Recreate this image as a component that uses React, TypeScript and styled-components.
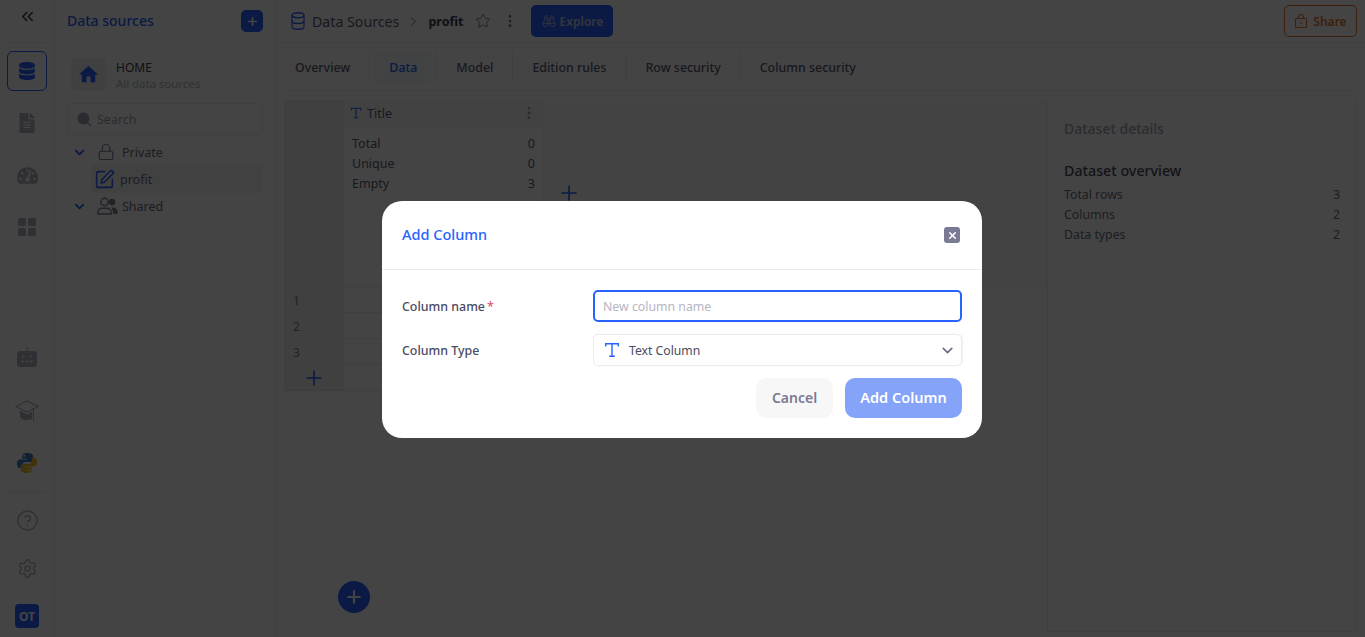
import React from 'react'
import styled, { createGlobalStyle } from 'styled-components'
import {
  Binoculars,
  ChevronDown,
  ChevronRight,
  ChevronsLeft,
  CircleHelp,
  Database,
  EllipsisVertical,
  Lock,
  Plus,
  Settings,
  SquarePen,
  Star,
  X,
} from 'lucide-react'
import { FaDatabase, FaFileAlt, FaTachometerAlt } from 'react-icons/fa'
import { MdHome } from 'react-icons/md'

const GlobalStyle = createGlobalStyle`
  * { box-sizing: border-box; }
  html, body { margin: 0; height: 100%; overflow: hidden; background: #fff; }
  body { font-family: "Noto Sans", "Open Sans", sans-serif; color: #5c5c74; }
`

const TextTypeIcon = ({ size = 14 }: { size?: number }) => (
  <svg width={size} height={size} viewBox="0 0 16 16" fill="none" stroke="currentColor" strokeWidth="1.4">
    <path d="M1.7 4.6V1.7h12.6v2.9M8 1.7v12.6M5.2 14.3h5.6" />
  </svg>
)

const GridIcon = () => (
  <svg width="18" height="18" viewBox="0 0 18 18" fill="currentColor">
    <rect x="0" y="0" width="8" height="8" rx="1.5" />
    <rect x="10" y="0" width="8" height="8" rx="1.5" />
    <rect x="0" y="10" width="8" height="8" rx="1.5" />
    <rect x="10" y="10" width="8" height="8" rx="1.5" />
  </svg>
)

const RobotIcon = () => (
  <svg width="20" height="20" viewBox="0 0 20 20">
    <path fill="currentColor" d="M9.5 0h1v4H17a3 3 0 0 1 3 3v10a3 3 0 0 1-3 3H3a3 3 0 0 1-3-3V7a3 3 0 0 1 3-3h6.500z" />
    <g fill="#eeeef3">
      <circle cx="6.500" cy="9.500" r="1.200" />
      <circle cx="13.500" cy="9.500" r="1.200" />
      <circle cx="5.500" cy="14.500" r="1.200" />
      <circle cx="10" cy="14.500" r="1.200" />
      <circle cx="14.500" cy="14.500" r="1.200" />
    </g>
  </svg>
)

const GraduationIcon = () => (
  <svg width="24" height="22" viewBox="0 0 24 22" fill="none" stroke="currentColor" strokeWidth="1.200">
    <path d="M12 1 23.200 6.500 12 12 .8 6.500z" />
    <path fill="currentColor" stroke="none" d="M5 10.200v6.300c0 1.900 3.300 3.500 7 3.500s5-1 5-1v-7.200l-5 2.700z" />
    <path d="M17 8.500h1.500V21" />
  </svg>
)

const PythonIcon = () => (
  <svg width="22" height="22" viewBox="0 0 24 24">
    <path
      fill="#3f7fc0"
      d="M11.900 1C8.600 1 6.700 2.300 6.700 4.600v2.700h5.400v.9H4.600C2.300 8.200 1 10 1 12.900c0 3 1.300 4.900 3.500 4.900h2V15c0-2.200 1.800-4 4-4h5.200c1.700 0 3-1.400 3-3V4.400C18.700 2.200 16 1 11.900 1zM9 3a1.100 1.100 0 1 1 0 2.200A1.100 1.100 0 0 1 9 3z"
    />
    <path
      fill="#f0c030"
      d="M12.100 23c3.300 0 5.200-1.300 5.200-3.600v-2.700h-5.400v-.9h7.500c2.300 0 3.600-1.800 3.600-4.700 0-3-1.300-4.900-3.500-4.900h-2V9c0 2.200-1.800 4-4 4H8.300c-1.700 0-3 1.400-3 3v3.600C5.300 21.800 8 23 12.100 23zM15 21a1.100 1.100 0 1 1 0-2.200 1.100 1.100 0 0 1 0 2.200z"
    />
  </svg>
)

const SearchBlob = () => (
  <svg width="15" height="15" viewBox="0 0 15 15" fill="currentColor">
    <circle cx="6.500" cy="6.500" r="6" />
    <path d="M10.500 10.500l3.500 3.500" stroke="currentColor" strokeWidth="1.500" />
  </svg>
)

const UsersIcon = () => (
  <svg width="21" height="18" viewBox="0 0 21 18" fill="none" stroke="currentColor" strokeWidth="1.400">
    <circle cx="7.500" cy="5" r="3.700" />
    <path d="M.8 17v-1.500c0-2.600 2-4.300 4.500-4.300h4.400c2.500 0 4.500 1.700 4.500 4.300V17z" />
    <circle cx="15" cy="5" r="3.200" fill="currentColor" stroke="none" />
    <path d="M14 10.500h2.500c2.400 0 4 1.700 4 4.500v2h-4.500c0-2.800-.6-5-2-6.500z" fill="currentColor" stroke="none" />
  </svg>
)

const ShareBagIcon = () => (
  <svg width="14" height="14" viewBox="0 0 14 14" fill="none" stroke="currentColor" strokeWidth="1.100">
    <rect x="1.500" y="4.500" width="11" height="9" rx=".8" />
    <path d="M4.500 4.500V3a2.500 2.500 0 0 1 5 0v1.500M6 9h2" />
  </svg>
)

const railTop = [
  { key: 'file', icon: <FaFileAlt size={20} /> },
  { key: 'gauge', icon: <FaTachometerAlt size={21} /> },
  { key: 'grid', icon: <GridIcon /> },
]
const tabs = ['Overview', 'Data', 'Model', 'Edition rules', 'Row security', 'Column security']
const stats = [
  ['Total', '0'],
  ['Unique', '0'],
  ['Empty', '3'],
]
const overview = [
  ['Total rows', '3'],
  ['Columns', '2'],
  ['Data types', '2'],
]

export default function App() {
  return (
    <>
      <GlobalStyle />
      <Page>
        <Rail>
          <RailCollapse>
            <ChevronsLeft size={19} strokeWidth={2} />
          </RailCollapse>
          <RailActive>
            <FaDatabase size={18} />
          </RailActive>
          <RailGroup>
            {railTop.map((item) => (
              <RailItem key={item.key}>{item.icon}</RailItem>
            ))}
          </RailGroup>
          <RailBottom>
            <RailRobot>
              <RobotIcon />
            </RailRobot>
            <RailItem>
              <GraduationIcon />
            </RailItem>
            <RailItem>
              <PythonIcon />
            </RailItem>
            <RailDivider />
            <RailSmall>
              <CircleHelp size={23} strokeWidth={1.5} />
            </RailSmall>
            <RailSmall>
              <Settings size={21} strokeWidth={1.6} />
            </RailSmall>
            <Avatar>OT</Avatar>
          </RailBottom>
        </Rail>

        <Sidebar>
          <SidebarHead>
            <SidebarTitle>Data sources</SidebarTitle>
            <SquareAdd>
              <Plus size={13} strokeWidth={3} />
            </SquareAdd>
          </SidebarHead>
          <HomeRow>
            <HomeTile>
              <MdHome size={23} />
            </HomeTile>
            <HomeText>
              <HomeName>HOME</HomeName>
              <HomeSub>All data sources</HomeSub>
            </HomeText>
          </HomeRow>
          <SearchBox>
            <SearchBlob />
            <span>Search</span>
          </SearchBox>
          <Tree>
            <TreeRow>
              <TreeChevron>
                <ChevronDown size={15} strokeWidth={3} />
              </TreeChevron>
              <TreeIcon>
                <Lock size={18} strokeWidth={1.5} />
              </TreeIcon>
              <span>Private</span>
            </TreeRow>
            <TreeLeaf>
              <SquarePen size={21} strokeWidth={1.8} />
              <span>profit</span>
            </TreeLeaf>
            <TreeRow>
              <TreeChevron>
                <ChevronDown size={15} strokeWidth={3} />
              </TreeChevron>
              <TreeIcon>
                <UsersIcon />
              </TreeIcon>
              <span>Shared</span>
            </TreeRow>
          </Tree>
        </Sidebar>

        <Main>
          <TopBar>
            <CrumbIcon>
              <Database width={16} height={20} strokeWidth={1.7} preserveAspectRatio="none" />
            </CrumbIcon>
            <CrumbRoot>Data Sources</CrumbRoot>
            <CrumbSep>
              <ChevronRight size={15} strokeWidth={1.4} />
            </CrumbSep>
            <CrumbName>profit</CrumbName>
            <CrumbStar>
              <Star size={16} strokeWidth={1.3} />
            </CrumbStar>
            <CrumbMore>
              <EllipsisVertical size={16} strokeWidth={2} />
            </CrumbMore>
            <ExploreButton>
              <Binoculars size={14} strokeWidth={1.4} />
              Explore
            </ExploreButton>
            <ShareButton>
              <ShareBagIcon />
              Share
            </ShareButton>
          </TopBar>

          <TabsBar>
            {tabs.map((tab) => (
              <Tab key={tab} $active={tab === 'Data'}>
                {tab}
              </Tab>
            ))}
          </TabsBar>

          <Content>
            <GridArea>
              <TopBand>
                <Corner />
                <ColumnCard>
                  <ColumnHead>
                    <ColumnType>
                      <TextTypeIcon size={12} />
                    </ColumnType>
                    <span>Title</span>
                    <ColumnMore>
                      <EllipsisVertical size={16} strokeWidth={2.4} />
                    </ColumnMore>
                  </ColumnHead>
                  <StatList>
                    {stats.map(([label, value]) => (
                      <StatRow key={label}>
                        <span>{label}</span>
                        <span>{value}</span>
                      </StatRow>
                    ))}
                  </StatList>
                </ColumnCard>
                <AddColumnCell>
                  <Plus size={24} strokeWidth={1.6} />
                </AddColumnCell>
              </TopBand>
              {[1, 2, 3].map((n) => (
                <DataRow key={n}>
                  <RowNumber>{n}</RowNumber>
                  <RowCell />
                </DataRow>
              ))}
              <DataRow>
                <RowAdd>
                  <Plus size={24} strokeWidth={1.6} />
                </RowAdd>
                <RowCell />
              </DataRow>
              <Fab>
                <Plus size={20} strokeWidth={2.6} />
              </Fab>
            </GridArea>

            <Details>
              <DetailsTitle>Dataset details</DetailsTitle>
              <OverviewTitle>Dataset overview</OverviewTitle>
              {overview.map(([label, value]) => (
                <OverviewRow key={label}>
                  <span>{label}</span>
                  <span>{value}</span>
                </OverviewRow>
              ))}
            </Details>
          </Content>
        </Main>
      </Page>

      <Overlay>
        <Modal>
          <ModalHead>
            <ModalTitle>Add Column</ModalTitle>
            <CloseButton>
              <X size={11} strokeWidth={3.4} />
            </CloseButton>
          </ModalHead>
          <ModalBody>
            <FormRow>
              <FieldLabel>
                Column name<Required>*</Required>
              </FieldLabel>
              <NameInput placeholder="New column name" readOnly />
            </FormRow>
            <FormRow>
              <FieldLabel>Column Type</FieldLabel>
              <SelectBox>
                <SelectIcon>
                  <TextTypeIcon size={16} />
                </SelectIcon>
                <SelectText>Text Column</SelectText>
                <SelectChevron>
                  <ChevronDown size={17} strokeWidth={2.4} />
                </SelectChevron>
              </SelectBox>
            </FormRow>
            <ModalActions>
              <CancelButton>Cancel</CancelButton>
              <AddButton>Add Column</AddButton>
            </ModalActions>
          </ModalBody>
        </Modal>
      </Overlay>
    </>
  )
}

const Page = styled.div`
  display: flex;
  height: 100vh;
  background: #fff;
`
const Rail = styled.aside`
  width: 55px;
  flex: none;
  display: flex;
  flex-direction: column;
  align-items: center;
  border-right: 1px solid #ebebf0;
  padding-bottom: 9px;
`
const RailCollapse = styled.div`
  width: 40px;
  height: 43px;
  flex: none;
  display: flex;
  justify-content: center;
  padding-top: 7px;
  color: #3c3c50;
  border-bottom: 1px solid #ebebf0;
`
const RailActive = styled.div`
  width: 40px;
  height: 40px;
  flex: none;
  margin-top: 8px;
  display: flex;
  align-items: center;
  justify-content: center;
  border: 1.5px solid #2962ff;
  border-radius: 6px;
  color: #2962ff;
`
const RailGroup = styled.div`
  margin-top: 6px;
  display: flex;
  flex-direction: column;
  align-items: center;
`
const RailItem = styled.div`
  width: 40px;
  height: 52px;
  flex: none;
  display: flex;
  align-items: center;
  justify-content: center;
  color: #b5b5c3;
`
const RailSmall = styled(RailItem)`
  height: 48px;
`
const RailRobot = styled(RailItem)`
  height: 56px;
`
const RailBottom = styled.div`
  margin-top: auto;
  display: flex;
  flex-direction: column;
  align-items: center;
`
const RailDivider = styled.div`
  width: 40px;
  height: 1px;
  margin: 2px 0 4px;
  background: #ebebf0;
`
const Avatar = styled.div`
  width: 24px;
  height: 24px;
  margin-top: 12px;
  display: flex;
  align-items: center;
  justify-content: center;
  border-radius: 4px;
  background: #2962ff;
  color: #fff;
  font-size: 12px;
  font-weight: 700;
`
const Sidebar = styled.aside`
  width: 221px;
  flex: none;
  padding: 10px 12px 0;
  border-right: 1px solid #ebebf0;
`
const SidebarHead = styled.div`
  height: 22px;
  display: flex;
  align-items: center;
  justify-content: space-between;
`
const SidebarTitle = styled.div`
  padding-bottom: 2px;
  color: #2962ff;
  font-size: 14px;
  font-weight: 500;
`
const SquareAdd = styled.div`
  width: 22px;
  height: 22px;
  display: flex;
  align-items: center;
  justify-content: center;
  border-radius: 5px;
  background: #2962ff;
  color: #fff;
`
const HomeRow = styled.div`
  height: 33px;
  margin: 26px 0 0 4px;
  display: flex;
  align-items: center;
  gap: 10px;
`
const HomeTile = styled.div`
  width: 35px;
  height: 33px;
  display: flex;
  align-items: center;
  justify-content: center;
  border-radius: 6px;
  background: #f0f0f4;
  color: #2962ff;
`
const HomeText = styled.div`
  padding-top: 2px;
`
const HomeName = styled.div`
  color: #3c3c50;
  font-size: 12px;
  line-height: 16px;
`
const HomeSub = styled.div`
  color: #b5b5c3;
  font-size: 11.4px;
  line-height: 16px;
`
const SearchBox = styled.div`
  height: 32px;
  margin-top: 12px;
  padding: 0 9px;
  display: flex;
  align-items: center;
  gap: 5px;
  border: 1px solid #ebebf0;
  border-radius: 6px;
  color: #a1a5b7;
  font-size: 12.5px;
`
const Tree = styled.div`
  margin-top: 4px;
`
const TreeRow = styled.div`
  height: 26px;
  display: flex;
  align-items: center;
  font-size: 12.5px;
  color: #6c6c84;
`
const TreeChevron = styled.span`
  width: 30px;
  padding-left: 5px;
  display: flex;
  color: #2962ff;
`
const TreeIcon = styled.span`
  width: 25px;
  display: flex;
  color: #7e8299;
`
const TreeLeaf = styled.div`
  height: 28px;
  margin-left: 24px;
  padding-left: 3px;
  display: flex;
  align-items: center;
  gap: 5px;
  border-radius: 5px;
  background: #f4f4f7;
  font-size: 12.5px;
  color: #6c6c84;
  svg {
    color: #2962ff;
  }
`
const Main = styled.main`
  flex: 1;
  min-width: 0;
  display: flex;
  flex-direction: column;
`
const TopBar = styled.header`
  height: 43px;
  flex: none;
  padding: 0 8px 0 14px;
  display: flex;
  align-items: center;
  border-bottom: 1px solid #ebebf0;
`
const CrumbIcon = styled.span`
  display: flex;
  color: #2962ff;
`
const CrumbRoot = styled.span`
  margin-left: 6px;
  font-size: 14.2px;
  color: #5c5c74;
`
const CrumbSep = styled.span`
  margin-left: 7px;
  display: flex;
  color: #5c5c74;
`
const CrumbName = styled.span`
  margin-left: 7px;
  font-size: 12.5px;
  font-weight: 700;
  color: #3c3c50;
`
const CrumbStar = styled.span`
  margin-left: 12px;
  display: flex;
  color: #6c6c84;
`
const CrumbMore = styled.span`
  margin-left: 11px;
  display: flex;
  color: #6c6c84;
`
const ExploreButton = styled.button`
  width: 82px;
  height: 32px;
  margin-left: 13px;
  padding: 0;
  display: flex;
  align-items: center;
  justify-content: center;
  gap: 4px;
  border: 0;
  border-radius: 5px;
  background: #2962ff;
  color: #c5cfe6;
  font: 600 12px "Noto Sans", sans-serif;
`
const ShareButton = styled.button`
  width: 73px;
  height: 32px;
  margin-left: auto;
  padding: 0;
  display: flex;
  align-items: center;
  justify-content: center;
  gap: 5px;
  border: 1px solid #e8762c;
  border-radius: 5px;
  background: transparent;
  color: #e8762c;
  font: 600 12px "Noto Sans", sans-serif;
`
const TabsBar = styled.nav`
  height: 48px;
  flex: none;
  margin: 0 8px;
  padding: 8px 0;
  display: flex;
  border-bottom: 1px solid #ebebf0;
`
const Tab = styled.div<{ $active?: boolean }>`
  height: 32px;
  padding: 0 19px;
  display: flex;
  align-items: center;
  font-size: 12.4px;
  font-weight: 500;
  color: ${(p) => (p.$active ? '#2962ff' : '#5c5c74')};
  background: ${(p) => (p.$active ? 'linear-gradient(90deg, #fff 0, #f4f6fb 18%, #f4f6fb 82%, #fff 100%)' : 'transparent')};
  border-right: 1px solid #ebebf0;
  &:first-child {
    padding-left: 11px;
  }
  &:last-child {
    border-right: 0;
  }
`
const Content = styled.div`
  flex: 1;
  min-height: 0;
  margin: 9px 8px 5px;
  display: flex;
`
const GridArea = styled.section`
  position: relative;
  width: 763px;
  flex: none;
`
const TopBand = styled.div`
  height: 187px;
  display: flex;
  background: #fafafa;
  border-bottom: 1px solid #ebebf0;
`
const Corner = styled.div`
  width: 60px;
  flex: none;
  background: #f0f0f3;
`
const ColumnCard = styled.div`
  width: 200px;
  flex: none;
  background: #fff;
  border-right: 1px solid #f0f0f4;
  font-size: 12.5px;
  color: #5c5c74;
`
const ColumnHead = styled.div`
  height: 27px;
  padding: 0 6px;
  display: flex;
  align-items: center;
  gap: 5px;
  background: #f8f8fa;
  border-bottom: 1px solid #f2f2f5;
`
const ColumnType = styled.span`
  display: flex;
  color: #2962ff;
`
const ColumnMore = styled.span`
  margin-left: auto;
  display: flex;
  color: #a1a5b7;
`
const StatList = styled.div`
  padding: 6px 8px 0;
`
const StatRow = styled.div`
  height: 20px;
  display: flex;
  align-items: center;
  justify-content: space-between;
`
const AddColumnCell = styled.div`
  width: 50px;
  padding-top: 81px;
  display: flex;
  align-items: flex-start;
  justify-content: center;
  color: #2962ff;
`
const DataRow = styled.div`
  width: 260px;
  height: 26px;
  display: flex;
`
const RowNumber = styled.div`
  width: 60px;
  flex: none;
  padding: 1px 0 0 9px;
  display: flex;
  align-items: center;
  background: #f0f0f3;
  border-bottom: 1px solid #e8e8ed;
  font-size: 12px;
  color: #7e8299;
`
const RowAdd = styled(RowNumber)`
  padding-left: 18px;
  color: #2962ff;
`
const RowCell = styled.div`
  flex: 1;
  background: #fff;
  border-bottom: 1px solid #ededf1;
  border-right: 1px solid #ededf1;
`
const Fab = styled.div`
  position: absolute;
  left: 54px;
  top: 481px;
  width: 32px;
  height: 32px;
  display: flex;
  align-items: center;
  justify-content: center;
  border-radius: 50%;
  background: #2962ff;
  color: #fff;
`
const Details = styled.aside`
  flex: 1;
  padding: 18px 16px 0;
  border: 1px solid #ebebf0;
  border-top-color: #f4f4f6;
`
const DetailsTitle = styled.div`
  font-size: 14px;
  font-weight: 500;
  color: #a1a5b7;
`
const OverviewTitle = styled.div`
  margin: 23px 0 4px;
  font-size: 14.25px;
  font-weight: 500;
  color: #4a4a5e;
`
const OverviewRow = styled.div`
  height: 20px;
  display: flex;
  align-items: center;
  justify-content: space-between;
  font-size: 12.3px;
  color: #6c6c84;
`
const Overlay = styled.div`
  position: fixed;
  inset: 0;
  display: flex;
  align-items: center;
  justify-content: center;
  background: rgba(0, 0, 0, 0.733);
`
const Modal = styled.div`
  width: 600px;
  height: 237px;
  margin: 2px 1px 0 0;
  border-radius: 20px;
  background: #fff;
`
const ModalHead = styled.div`
  height: 69px;
  padding: 0 22px 0 20px;
  display: flex;
  align-items: center;
  justify-content: space-between;
  border-bottom: 1px solid #eaeaef;
`
const ModalTitle = styled.div`
  margin-bottom: 2px;
  color: #2962ff;
  font-size: 14.5px;
  font-weight: 500;
`
const CloseButton = styled.div`
  width: 16px;
  height: 16px;
  display: flex;
  align-items: center;
  justify-content: center;
  border-radius: 3px;
  background: #7a7a95;
  color: #fff;
`
const ModalBody = styled.div`
  padding: 20px 20px 0;
`
const FormRow = styled.div`
  height: 32px;
  margin-bottom: 12px;
  display: flex;
  align-items: center;
`
const FieldLabel = styled.label`
  width: 191px;
  flex: none;
  font-size: 12.4px;
  font-weight: 500;
  color: #4b4b63;
`
const Required = styled.span`
  margin-left: 2px;
  color: #e4566a;
`
const NameInput = styled.input`
  flex: 1;
  height: 32px;
  padding: 0 8px;
  border: 2px solid #2962ff;
  border-radius: 5px;
  outline: none;
  font: 12.3px "Noto Sans", sans-serif;
  color: #4b4b63;
  &::placeholder {
    color: #b5b5c3;
  }
`
const SelectBox = styled.div`
  flex: 1;
  height: 32px;
  padding: 0 5px 0 10px;
  display: flex;
  align-items: center;
  border: 1px solid #ebebf0;
  border-radius: 5px;
  box-shadow: 1px 0 2px rgba(0, 0, 0, 0.06);
`
const SelectIcon = styled.span`
  display: flex;
  color: #2962ff;
`
const SelectText = styled.span`
  margin-left: 9px;
  font-size: 12.2px;
  color: #4b4b63;
`
const SelectChevron = styled.span`
  margin-left: auto;
  display: flex;
  color: #6e6e8a;
`
const ModalActions = styled.div`
  display: flex;
  justify-content: flex-end;
  gap: 12px;
`
const CancelButton = styled.button`
  width: 77px;
  height: 40px;
  padding: 0 0 2px;
  border: 0;
  border-radius: 10px;
  background: #f7f7f8;
  color: #7a7a95;
  font: 600 14px "Noto Sans", sans-serif;
`
const AddButton = styled.button`
  width: 117px;
  height: 40px;
  padding: 0 0 2px;
  border: 0;
  border-radius: 10px;
  background: #85a3f8;
  color: #fff;
  font: 600 14.5px "Noto Sans", sans-serif;
`
